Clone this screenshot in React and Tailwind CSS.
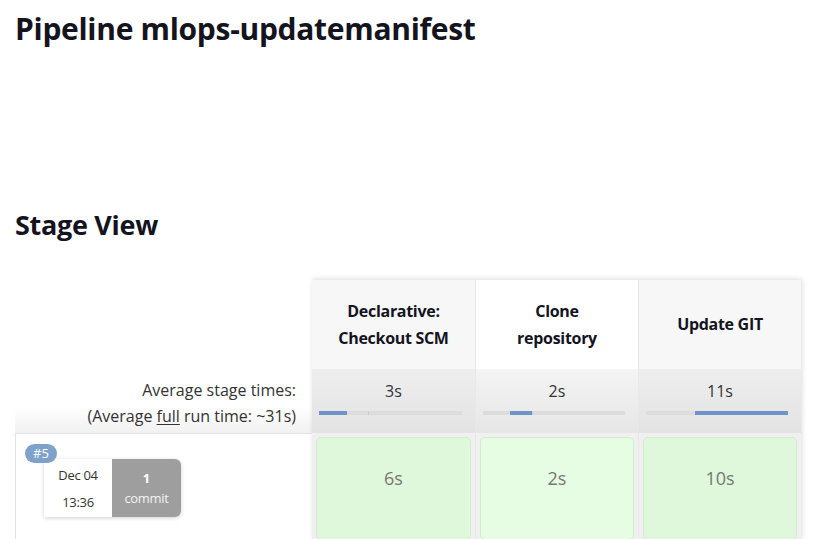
const STAGES = [
  { name: ["Declarative:", "Checkout SCM"], avg: "3s", bar: [7, 35], run: "6s", head: "bg-[#f7f7f7]", cell: "bg-[#dff7db]", avgBg: "from-[#eeeeee] to-[#e3e3e3]" },
  { name: ["Clone", "repository"], avg: "2s", bar: [34, 56], run: "2s", head: "bg-white", cell: "bg-[#e6fde3]", avgBg: "from-[#f4f4f4] to-[#e6e6e6]" },
  { name: ["Update GIT"], avg: "11s", bar: [56, 149], run: "10s", head: "bg-[#f7f7f7]", cell: "bg-[#dff7db]", avgBg: "from-[#eeeeee] to-[#e3e3e3]" },
];

// bar spans x 7..150 inside a 163px column
function AvgBar({ from, to }) {
  return (
    <div className="relative ml-[7px] mr-[13px] h-[4px] bg-[#dcdcdc]">
      <div className="absolute top-0 h-full w-px bg-[#cdcdcd]" style={{ left: 49 }} />
      <div className="absolute top-0 h-full bg-[#6f94cb]" style={{ left: from - 7, width: to - from }} />
    </div>
  );
}

export default function App() {
  return (
    <div className="min-h-[539px] bg-white pl-[15px] text-[#333]" style={{ fontFamily: '"Open Sans", "Noto Sans", sans-serif' }}>
      <h1 className="pt-[7px] text-[30px] font-bold leading-[44px] tracking-[-0.3px] text-[#14141f]">Pipeline mlops-updatemanifest</h1>
      <h2 className="mt-[154px] text-[27px] font-bold leading-[40px] tracking-[-0.3px] text-[#14141f]">Stage View</h2>

      <div className="mt-[35px] flex">
        <div className="flex w-[297px] flex-col">
          <div className="h-[89px]" />
          <div className="flex h-[64px] flex-col items-end justify-center bg-gradient-to-b from-white from-60% to-[#f1f1f1] pr-[16px] pt-[3px] text-[16px] leading-[26px]">
            <span>Average stage times:</span>
            <span>
              (Average <span className="underline underline-offset-2">full</span> run time: ~31s)
            </span>
          </div>
          <div className="relative h-[107px] border border-r-0 border-[#e2e2e2]">
            <div className="absolute left-[9px] top-[10px] z-10 rounded-full bg-[#7fa2cb] px-[8px] text-[13px] leading-[19px] text-white">#5</div>
            <div className="ml-[28px] mt-[25px] flex h-[58px] w-[137px] rounded-r-[6px] shadow-[0_1px_4px_rgba(0,0,0,0.18)]">
              <div className="flex w-[68px] flex-col items-center justify-center gap-[5px] bg-white text-[13px] leading-[22px] tracking-[-0.3px]">
                <span>Dec 04</span>
                <span>13:36</span>
              </div>
              <div className="flex w-[69px] flex-col items-center justify-center rounded-r-[6px] bg-[#9e9e9e] text-[13px] leading-[20px] text-[#f2f2f2]">
                <span className="font-bold text-white">1</span>
                <span className="tracking-[-0.3px]">commit</span>
              </div>
            </div>
          </div>
        </div>

        <div className="flex shadow-[1px_-1px_5px_rgba(0,0,0,0.14)]">
          {STAGES.map((s, i) => (
            <div key={i} className={"flex w-[163px] flex-col bg-[#f0f0f0] " + (i > 0 ? "border-l border-[#e8e8e8]" : "")}>
              <div className={"flex h-[89px] flex-col items-center justify-center text-[16px] font-bold leading-[27px] tracking-[-0.3px] text-[#14141f] " + s.head}>
                {s.name.map((l) => (
                  <span key={l}>{l}</span>
                ))}
              </div>
              <div className={"flex h-[64px] flex-col justify-start bg-gradient-to-b " + s.avgBg}>
                <div className="mt-[9px] text-center text-[16px] leading-[26px]">{s.avg}</div>
                <div className="mt-[7px]">
                  <AvgBar from={s.bar[0]} to={s.bar[1]} />
                </div>
              </div>
              <div className="h-[107px] p-[4px] pb-0">
                <div className={"flex h-full items-center justify-center rounded-[5px] border border-[#d4ead1] pb-[20px] text-[18px] text-[#777] " + s.cell}>
                  {s.run}
                </div>
              </div>
            </div>
          ))}
        </div>
      </div>
    </div>
  );
}
